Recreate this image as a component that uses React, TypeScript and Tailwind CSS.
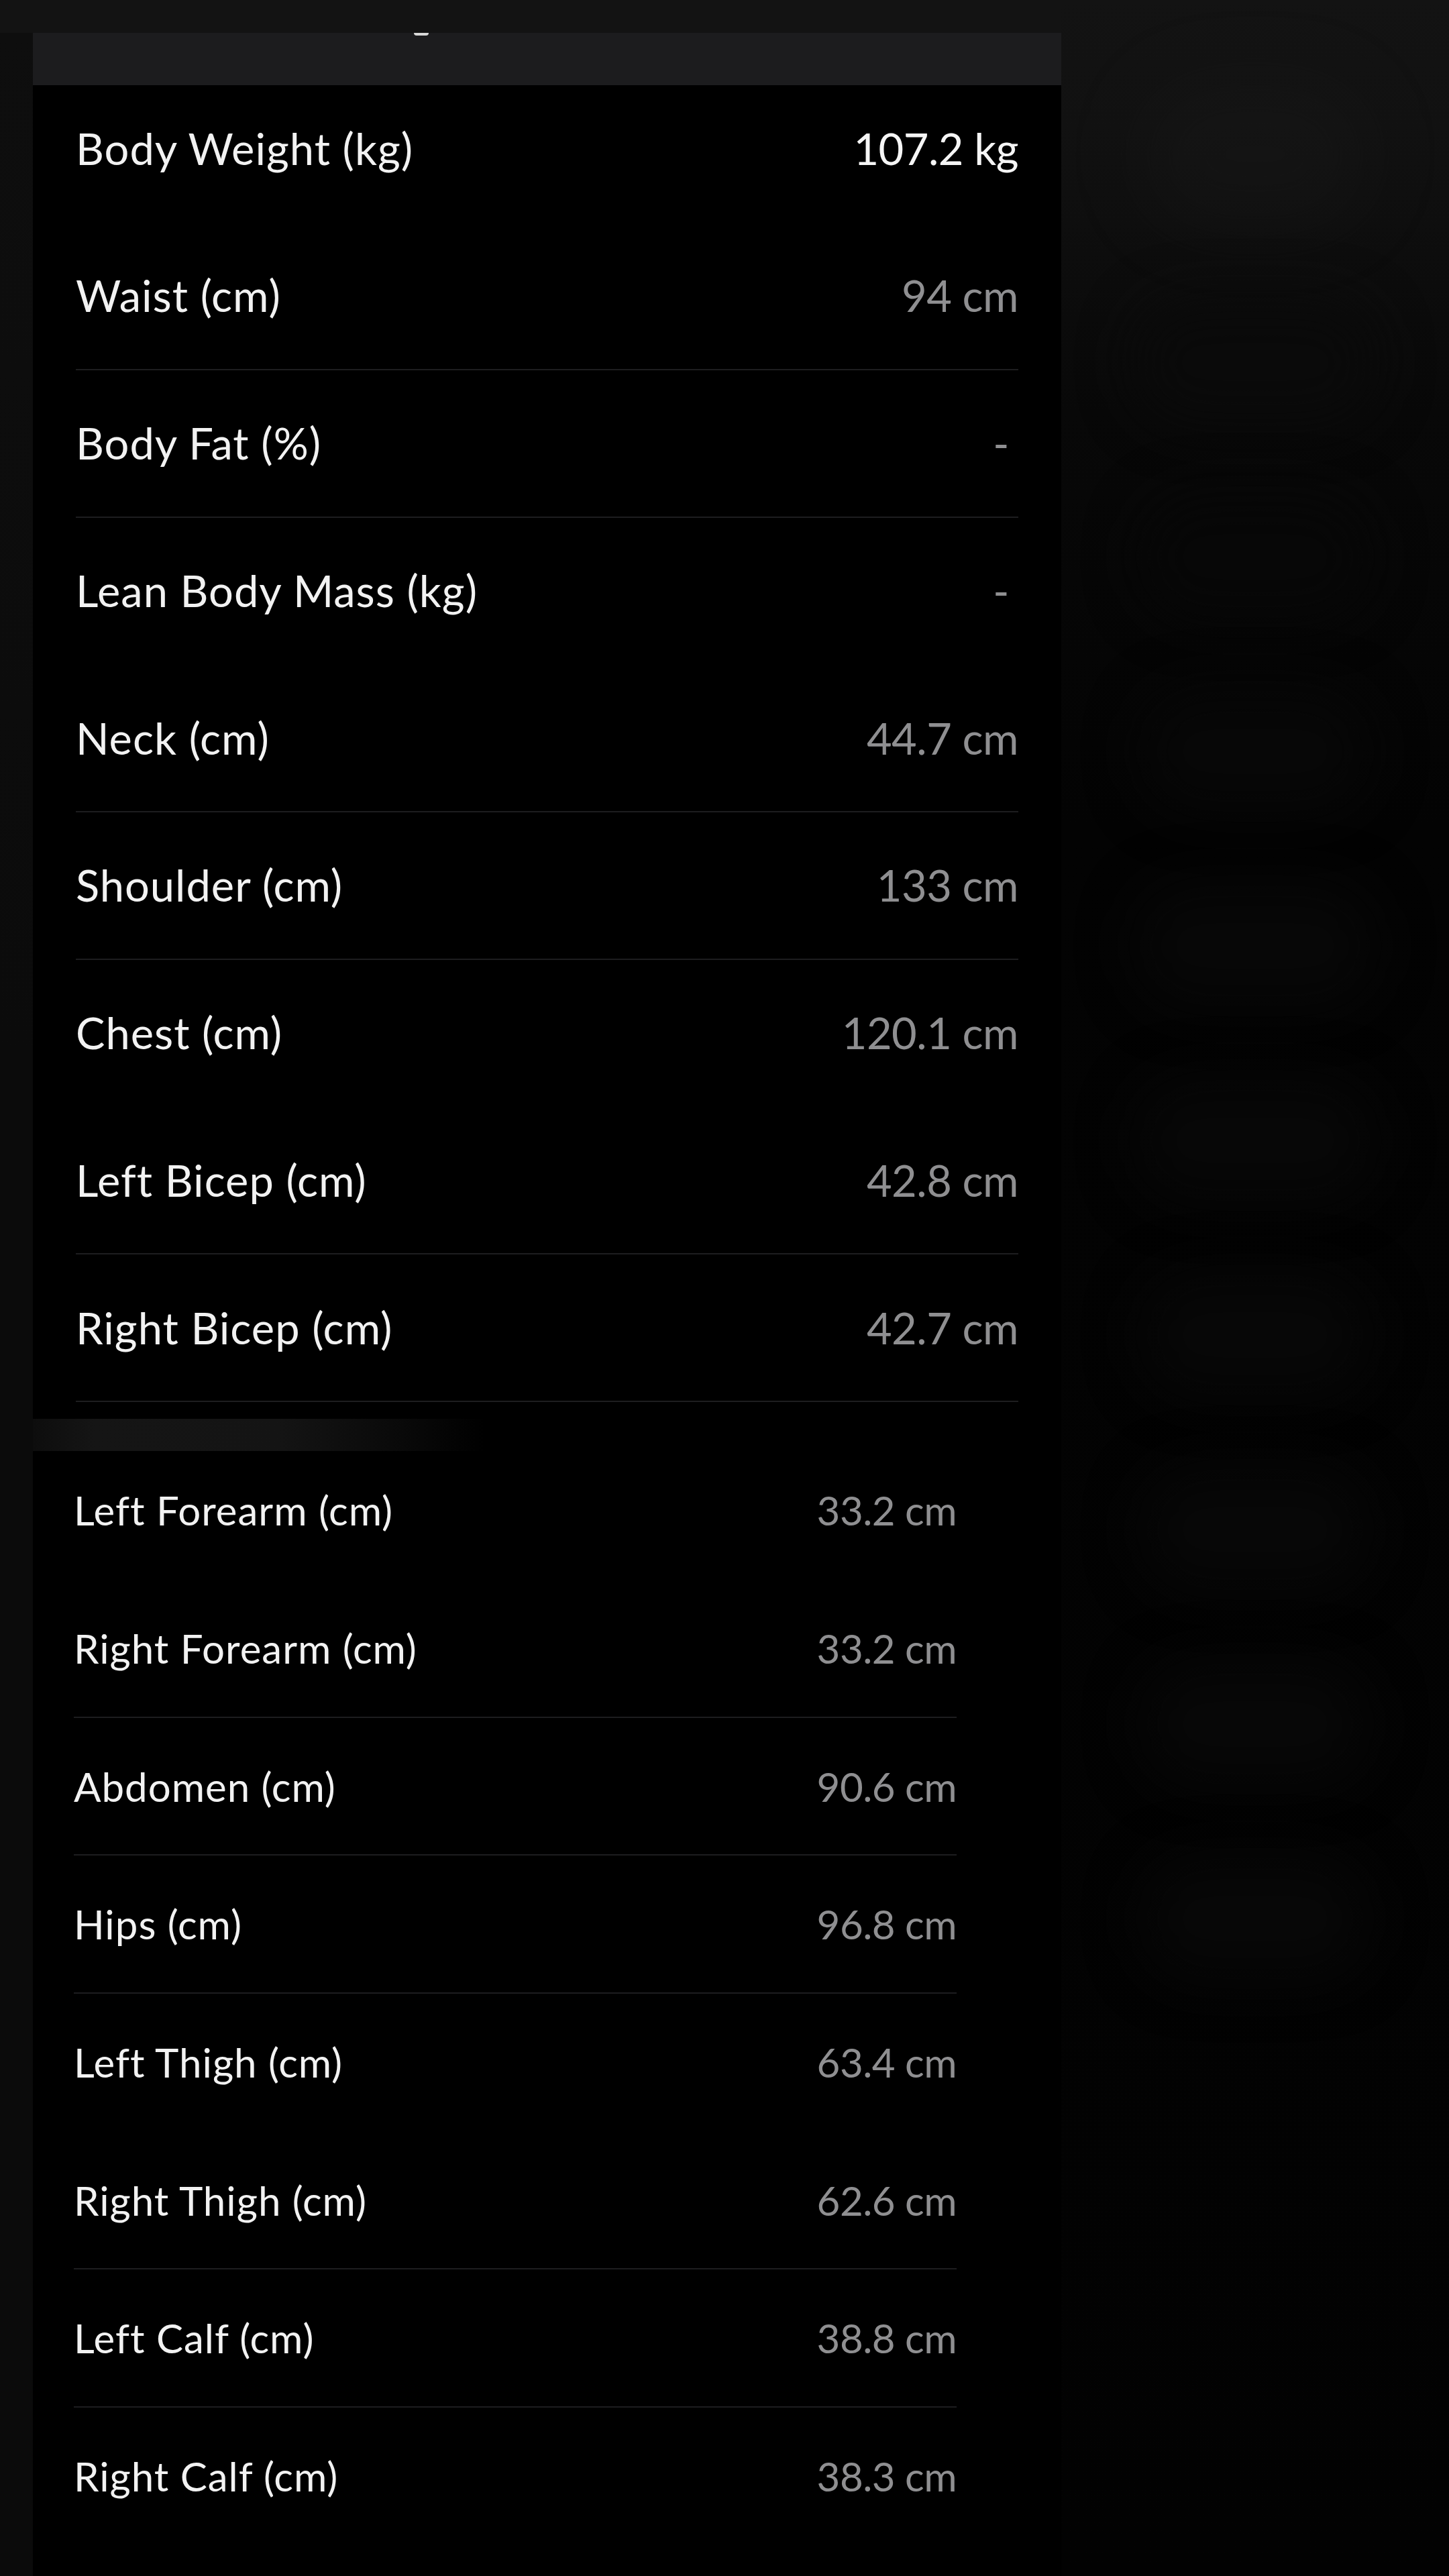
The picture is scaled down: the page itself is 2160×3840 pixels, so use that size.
import React from "react";

type Item = { label: string; value: string; line: boolean };

const firstRows: Item[] = [
  { label: "Waist (cm)", value: "94 cm", line: true },
  { label: "Body Fat (%)", value: "-", line: true },
  { label: "Lean Body Mass (kg)", value: "-", line: false },
  { label: "Neck (cm)", value: "44.7 cm", line: true },
  { label: "Shoulder (cm)", value: "133 cm", line: true },
  { label: "Chest (cm)", value: "120.1 cm", line: false },
  { label: "Left Bicep (cm)", value: "42.8 cm", line: true },
  { label: "Right Bicep (cm)", value: "42.7 cm", line: true },
];

const secondRows: Item[] = [
  { label: "Right Forearm (cm)", value: "33.2 cm", line: true },
  { label: "Abdomen (cm)", value: "90.6 cm", line: true },
  { label: "Hips (cm)", value: "96.8 cm", line: true },
  { label: "Left Thigh (cm)", value: "63.4 cm", line: false },
  { label: "Right Thigh (cm)", value: "62.6 cm", line: true },
  { label: "Left Calf (cm)", value: "38.8 cm", line: true },
  { label: "Right Calf (cm)", value: "38.3 cm", line: false },
];

function RowA({ item }: { item: Item }) {
  return (
    <div
      className={
        "flex h-[219.75px] items-center justify-between border-b-2 " +
        (item.line ? "border-[#1d1d1f]" : "border-transparent")
      }
    >
      <span className="text-[65px] leading-none tracking-[1px] text-[#f2f2f2]">{item.label}</span>
      <span
        className={
          "text-[65px] leading-none tracking-[-0.5px] text-[#8f8f91] " +
          (item.value === "-" ? "pr-[14px]" : "")
        }
      >
        {item.value}
      </span>
    </div>
  );
}

function RowB({ item }: { item: Item }) {
  return (
    <div
      className={
        "flex h-[205.7px] items-center justify-between border-b-2 " +
        (item.line ? "border-[#1d1d1f]" : "border-transparent")
      }
    >
      <span className="text-[60px] leading-none tracking-[1px] text-[#f2f2f2]">{item.label}</span>
      <span className="text-[60px] leading-none tracking-[-0.5px] text-[#8f8f91]">{item.value}</span>
    </div>
  );
}

export default function App() {
  return (
    <div className="grid h-[3840px] w-[2160px] grid-cols-[1582px_1fr] overflow-hidden bg-black font-['Lato','Liberation_Sans',sans-serif]">
      {/* left + content */}
      <div className="flex flex-col">
        <div className="h-[49px] bg-[#131313]" />
        <div className="flex flex-1">
          <div className="w-[49px] bg-[linear-gradient(180deg,#0e0e0e_0%,#0b0b0b_40%,#0b0b0b_100%)]" />
          <div className="flex flex-1 flex-col">
            {/* header strip */}
            <div className="h-[78px] bg-[#1c1c1e]">
              <div className="ml-[568px] h-[4px] w-[22px] rounded-b-full bg-[#d9d9d9]" />
            </div>
            {/* first panel */}
            <div className="flex h-[1988px] flex-col bg-black px-[64px]">
              <div className="flex h-[205px] items-center justify-between border-b-2 border-transparent pb-[15px]">
                <span className="text-[65px] leading-none tracking-[1px] text-[#f2f2f2]">Body Weight (kg)</span>
                <span className="text-[65px] leading-none tracking-[-0.5px] text-[#f5f5f5]">107.2 kg</span>
              </div>
              {firstRows.map((r) => (
                <RowA key={r.label} item={r} />
              ))}
            </div>
            {/* glow strip */}
            <div className="h-[48px] bg-[linear-gradient(90deg,#0d0d0d_0%,#151515_6%,#141414_24%,#090909_36%,#000000_44%)]" />
            {/* second panel */}
            <div className="flex flex-1 flex-col bg-black pl-[61px] pr-[156px]">
              <div className="flex h-[192px] items-center justify-between border-b-2 border-transparent pb-[14px]">
                <span className="text-[60px] leading-none tracking-[1px] text-[#f2f2f2]">Left Forearm (cm)</span>
                <span className="text-[60px] leading-none tracking-[-0.5px] text-[#8f8f91]">33.2 cm</span>
              </div>
              {secondRows.map((r) => (
                <RowB key={r.label} item={r} />
              ))}
            </div>
          </div>
        </div>
      </div>
      {/* blurred background on the right */}
      <div className="flex flex-col items-center gap-[110px] bg-[linear-gradient(180deg,#131313_0%,#111111_5%,#080808_16%,#030303_32%,#020202_100%)] pt-[120px]">
        <div className="h-[220px] w-[340px] rounded-[110px] bg-[#1a1a1a] opacity-40 blur-[50px]" />
        <div className="h-[180px] w-[360px] rounded-[90px] bg-[#0a0a0a] blur-[40px]" />
        <div className="h-[180px] w-[340px] rounded-[90px] bg-[#070707] blur-[40px]" />
        <div className="h-[180px] w-[340px] rounded-[90px] bg-[#070707] blur-[40px]" />
        <div className="h-[180px] w-[360px] rounded-[90px] bg-[#070707] blur-[40px]" />
        <div className="h-[180px] w-[360px] rounded-[90px] bg-[#070707] blur-[40px]" />
        <div className="h-[180px] w-[340px] rounded-[90px] bg-[#070707] blur-[40px]" />
        <div className="h-[180px] w-[340px] rounded-[90px] bg-[#070707] blur-[40px]" />
        <div className="h-[180px] w-[340px] rounded-[90px] bg-[#070707] blur-[40px]" />
        <div className="h-[180px] w-[340px] rounded-[90px] bg-[#070707] blur-[40px]" />
      </div>
    </div>
  );
}
